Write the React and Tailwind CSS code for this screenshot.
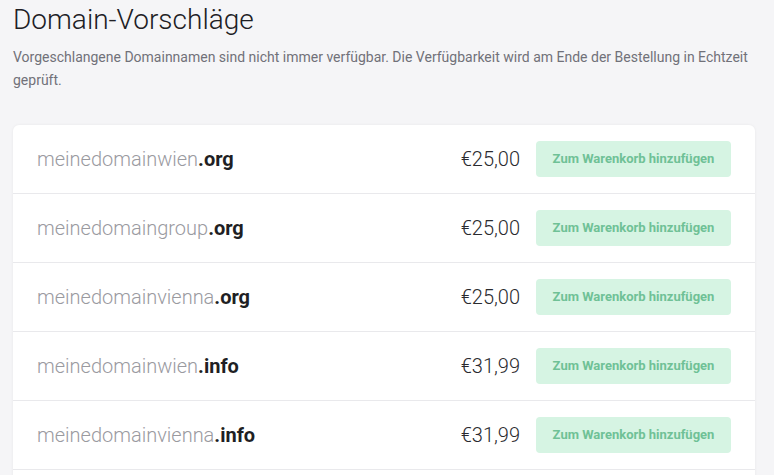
const domains = [
  { name: "meinedomainwien", tld: ".org", price: "€25,00" },
  { name: "meinedomaingroup", tld: ".org", price: "€25,00" },
  { name: "meinedomainvienna", tld: ".org", price: "€25,00" },
  { name: "meinedomainwien", tld: ".info", price: "€31,99" },
  { name: "meinedomainvienna", tld: ".info", price: "€31,99" },
];

function DomainRow({ domain }) {
  return (
    <div className="flex h-[69px] items-center justify-between border-b border-[#e9e9ec] px-6">
      <div className="text-[20px] font-light text-[#9a9a9f]">
        {domain.name}
        <span className="font-bold text-[#1f1f24]">{domain.tld}</span>
      </div>
      <div className="flex items-center gap-4">
        <span className="text-[20px] font-light text-[#2a2a2e]">{domain.price}</span>
        <button className="h-9 w-[195px] rounded bg-[#d6f4e3] text-[13px] font-bold text-[#6fc196]">
          Zum Warenkorb hinzufügen
        </button>
      </div>
    </div>
  );
}

export default function App() {
  return (
    <div className="h-[475px] overflow-hidden bg-[#f5f5f7] pl-[13px] pr-[19px] pt-[3px] font-['Roboto',sans-serif]">
      <h1 className="text-[28px] font-light leading-[34px] text-[#202024]">Domain-Vorschläge</h1>
      <p className="mt-[9px] text-[14px] leading-[23px] text-[#717179]">
        Vorgeschlangene Domainnamen sind nicht immer verfügbar. Die Verfügbarkeit wird am Ende der Bestellung in Echtzeit geprüft.
      </p>
      <div className="mt-[33px] overflow-hidden rounded-t-md bg-white pb-4 shadow-[0_0_3px_rgba(0,0,0,0.06)]">
        {domains.map((d, i) => (
          <DomainRow key={i} domain={d} />
        ))}
      </div>
    </div>
  );
}
